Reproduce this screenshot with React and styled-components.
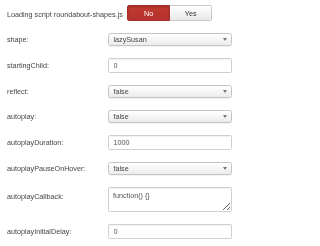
import React from "react";
import styled, { createGlobalStyle } from "styled-components";

const GlobalStyle = createGlobalStyle`
  html, body {
    margin: 0;
    padding: 0;
    background: #fff;
  }
  body {
    font-family: "Liberation Sans", Arial, sans-serif;
    font-size: 7.2px;
    color: #333;
    -webkit-font-smoothing: antialiased;
  }
`;

const Form = styled.div`
  padding: 5px 0 0 7px;
  width: 243px;
  box-sizing: border-box;
  will-change: transform;
`;

const ToggleRow = styled.div`
  display: flex;
  align-items: flex-start;
  gap: 4.5px;
  margin-bottom: 11.5px;
`;

const Row = styled.div`
  display: grid;
  grid-template-columns: 101px 124px;
  align-items: start;
  margin-bottom: ${(p) => p.$gap || 12}px;
`;

const Label = styled.label`
  display: block;
  line-height: ${(p) => p.$lh || 13}px;
  padding-top: ${(p) => p.$top || 0}px;
  white-space: nowrap;
  color: #444;
`;

const Toggle = styled.div`
  display: flex;
  height: 16px;
`;

const ToggleButton = styled.div`
  width: 42.5px;
  box-sizing: border-box;
  display: flex;
  align-items: center;
  justify-content: center;
  font-size: 7.2px;
  border: 1px solid ${(p) => (p.$active ? "#a52d27" : "#c8c8c8")};
  color: ${(p) => (p.$active ? "#fff" : "#333")};
  background: ${(p) =>
    p.$active
      ? "linear-gradient(#c0392f, #b5332c)"
      : "linear-gradient(#ffffff, #e9e9e9)"};
  border-radius: ${(p) => (p.$first ? "2px 0 0 2px" : "0 2px 2px 0")};
  ${(p) => (p.$first ? "" : "border-left: none;")}
  box-shadow: ${(p) =>
    p.$active ? "inset 0 1px 2px rgba(0,0,0,0.2)" : "inset 0 1px 0 #fff"};
`;

const SelectBox = styled.div`
  height: 13px;
  box-sizing: border-box;
  display: flex;
  align-items: center;
  justify-content: space-between;
  padding: 0 4px 0 4.5px;
  border: 1px solid #c4c4c4;
  border-radius: 2.5px;
  background: linear-gradient(#ffffff, #ececec);
  color: #444;
  box-shadow: 0 1px 0 rgba(0, 0, 0, 0.05);
`;

const Arrow = styled.svg`
  width: 4px;
  height: 3px;
  flex: none;
`;

const Input = styled.input`
  height: 15px;
  width: 100%;
  box-sizing: border-box;
  margin: 0;
  padding: 0 4.5px;
  border: 1px solid #d0d0d0;
  border-radius: 1.5px;
  background: #fff;
  font-family: inherit;
  font-size: 7.2px;
  color: #555;
  box-shadow: inset 0 1px 1px rgba(0, 0, 0, 0.06);
  outline: none;
`;

const TextArea = styled.textarea`
  height: 25px;
  width: 100%;
  box-sizing: border-box;
  margin: 0;
  padding: 3px 4px;
  border: 1px solid #d0d0d0;
  border-radius: 1.5px;
  font-family: inherit;
  font-size: 7.2px;
  line-height: 9px;
  color: #555;
  box-shadow: inset 0 1px 1px rgba(0, 0, 0, 0.06);
  outline: none;
`;

function Select({ value }) {
  return (
    <SelectBox>
      <span>{value}</span>
      <Arrow viewBox="0 0 4 3">
        <path d="M0 0 L4 0 L2 3 Z" fill="#777" />
      </Arrow>
    </SelectBox>
  );
}

const fields = [
  { label: "shape:", type: "select", value: "lazySusan" },
  { label: "startingChild:", type: "input", value: "0" },
  { label: "reflect:", type: "select", value: "false" },
  { label: "autoplay:", type: "select", value: "false" },
  { label: "autoplayDuration:", type: "input", value: "1000" },
  { label: "autoplayPauseOnHover:", type: "select", value: "false" },
  { label: "autoplayCallback:", type: "textarea", value: "function() {}" },
  { label: "autoplayInitialDelay:", type: "input", value: "0" },
];

export default function App() {
  return (
    <>
      <GlobalStyle />
      <Form>
        <ToggleRow>
          <Label $top={3}>Loading script roundabout-shapes.js</Label>
          <Toggle>
            <ToggleButton $active $first>
              No
            </ToggleButton>
            <ToggleButton>Yes</ToggleButton>
          </Toggle>
        </ToggleRow>
        {fields.map((f) => (
          <Row key={f.label}>
            {f.type === "select" && <Label $lh={13}>{f.label}</Label>}
            {f.type === "input" && <Label $lh={15}>{f.label}</Label>}
            {f.type === "textarea" && (
              <Label $lh={15} $top={2}>
                {f.label}
              </Label>
            )}
            {f.type === "select" && <Select value={f.value} />}
            {f.type === "input" && <Input defaultValue={f.value} />}
            {f.type === "textarea" && <TextArea defaultValue={f.value} />}
          </Row>
        ))}
      </Form>
    </>
  );
}
